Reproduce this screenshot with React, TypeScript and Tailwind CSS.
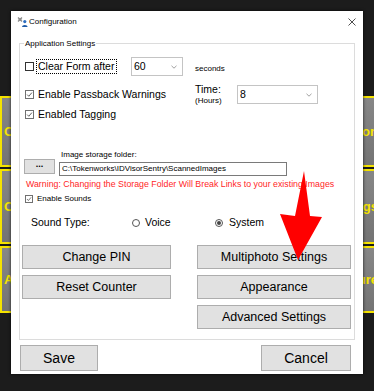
import React from 'react';

function Check({ checked, small }: { checked?: boolean; small?: boolean }) {
  return (
    <span
      className={`flex shrink-0 items-center justify-center border bg-white ${small ? 'h-[8px] w-[8px]' : 'h-[9px] w-[9px]'} ${checked ? 'border-[#707070]' : 'border-[#333333]'}`}
    >
      {checked && (
        <svg viewBox="0 0 8 8" className="h-full w-full">
          <path d="M1.3 4.1 L3.2 6 L6.8 1.8" fill="none" stroke="#333" strokeWidth="0.9" />
        </svg>
      )}
    </span>
  );
}

function Radio({ on }: { on?: boolean }) {
  return (
    <span className="flex h-[8px] w-[8px] shrink-0 items-center justify-center rounded-full border border-[#555] bg-white">
      {on && <span className="h-[4px] w-[4px] rounded-full bg-[#444]" />}
    </span>
  );
}

function Combo({ value, className }: { value: string; className: string }) {
  return (
    <div className={`flex items-center justify-between border border-[#c4c4c4] bg-white pl-[2px] pr-[5px] text-[10.5px] text-black ${className}`}>
      <span>{value}</span>
      <svg width="6" height="4" viewBox="0 0 6 4">
        <path d="M0.5 0.8 L3 3.2 L5.5 0.8" fill="none" stroke="#888" strokeWidth="0.8" />
      </svg>
    </div>
  );
}

function Btn({ children, className }: { children: React.ReactNode; className: string }) {
  return (
    <div className={`flex items-center justify-center border border-[#adadad] bg-[#e1e1e1] text-black ${className}`}>
      {children}
    </div>
  );
}

function BgButton({ label, right, className }: { label: string; right?: boolean; className: string }) {
  return (
    <div
      className={`flex items-center border-2 border-[#f5e300] bg-gradient-to-b from-[#878787] to-[#747474] text-[13px] font-bold text-[#f5e300] ${right ? 'justify-end pr-[2px]' : 'pl-[2px]'} ${className}`}
    >
      {label}
    </div>
  );
}

export default function App() {
  return (
    <div className="relative h-[391px] w-[374px] overflow-hidden bg-[#1c1c1c] font-['Liberation_Sans',Arial,sans-serif]">
      {/* app behind the dialog */}
      <div className="flex w-[382px] justify-between pt-[96px]">
        <div className="flex w-[170px] flex-col gap-[2px]">
          <BgButton label="Clear" className="h-[71px]" />
          <BgButton label="Count" className="h-[75px]" />
          <BgButton label="About" className="h-[67px]" />
        </div>
        <div className="flex w-[170px] flex-col gap-[2px]">
          <BgButton right label="Configuration" className="h-[71px]" />
          <BgButton right label="Settings" className="h-[75px]" />
          <BgButton right label="Capture" className="h-[67px]" />
        </div>
      </div>

      {/* Configuration dialog */}
      <div className="absolute left-[11px] top-[11px] flex h-[363px] w-[352px] flex-col bg-white shadow-[0_0_3px_rgba(0,0,0,0.8)]">
        <div className="flex h-[21px] items-center pl-[6px] pr-[7px]">
          <svg width="11" height="11" viewBox="0 0 11 11">
            <path d="M1 1.5 L5 5.5 M5 1.5 L1 5.5" stroke="#8a8a8a" strokeWidth="1.2" />
            <circle cx="3" cy="3.5" r="1.2" fill="none" stroke="#8a8a8a" strokeWidth="0.8" />
            <circle cx="7.8" cy="5.6" r="1.6" fill="#2f6fc0" />
            <path d="M5 11 C5 8.2 10.6 8.2 10.6 11 Z" fill="#1f5aa6" />
          </svg>
          <span className="ml-px text-[8px] text-black">Configuration</span>
          <svg className="ml-auto" width="8" height="8" viewBox="0 0 8 8">
            <path d="M0.5 0.5 L7.5 7.5 M7.5 0.5 L0.5 7.5" stroke="#222" strokeWidth="0.8" />
          </svg>
        </div>

        {/* group box */}
        <div className="mx-[8px] mt-[11px]">
          <div className="relative h-[297px] border border-[#dcdcdc] text-black">
            <span className="absolute -top-[5px] left-[4px] bg-white px-px text-[8px] leading-[10px]">
              Application Settings
            </span>

            <div className="mt-[13px] flex h-[19px] items-center pl-[5px]">
              <Check />
              <div className="ml-[2px] flex h-[15px] w-[81px] items-center border border-dotted border-black pl-px text-[10.5px]">
                Clear Form after
              </div>
              <Combo value="60" className="ml-[14px] h-[19px] w-[52px]" />
              <span className="ml-[12px] mt-[5px] text-[8px]">seconds</span>
            </div>

            <div className="mt-[9px] flex h-[19px] items-start pl-[5px]">
              <div className="flex h-[19px] w-[170px] items-center">
                <Check checked />
                <span className="ml-[4px] text-[10.5px]">Enable Passback Warnings</span>
              </div>
              <div className="-mt-px flex w-[42px] flex-col">
                <span className="text-[10.5px] leading-[10px]">Time:</span>
                <span className="mt-[2px] text-[8px] leading-[10px]">(Hours)</span>
              </div>
              <Combo value="8" className="h-[19px] w-[81px]" />
            </div>

            <div className="mt-px flex h-[19px] items-center pl-[5px]">
              <Check checked />
              <span className="ml-[4px] text-[10.5px]">Enabled Tagging</span>
            </div>

            <div className="mt-[27px] h-[8px] pl-[41px] text-[8px] leading-[8px]">Image storage folder:</div>

            <div className="flex h-[17px] items-start pl-[4px]">
              <Btn className="h-[15px] w-[31px] pb-[3px] text-[9px] font-bold">...</Btn>
              <div className="ml-[4px] mt-[3px] flex h-[14px] w-[228px] items-center border border-[#7a7a7a] pl-[2px] text-[8px]">
                C:\Tokenworks\IDVisorSentry\ScannedImages
              </div>
            </div>

            <div className="mt-[3px] h-[11px] pl-[6px] text-[8.8px] leading-[11px] text-[#ff1f1f]">
              Warning: Changing the Storage Folder Will Break Links to your existing Images
            </div>

            <div className="mt-[4px] flex h-[10px] items-center pl-[5px]">
              <Check checked small />
              <span className="ml-[4px] text-[8px]">Enable Sounds</span>
            </div>

            <div className="mt-[11px] flex h-[15px] items-center pl-[11px] text-[10.5px]">
              <span className="w-[101px]">Sound Type:</span>
              <div className="flex w-[83px] items-center">
                <Radio />
                <span className="ml-[5px]">Voice</span>
              </div>
              <div className="flex items-center">
                <Radio on />
                <span className="ml-[6px]">System</span>
              </div>
            </div>

            <div className="mt-[15px] flex pl-[2px] text-[12.5px]">
              <div className="flex w-[149px] flex-col gap-[6px]">
                <Btn className="h-[24px]">Change PIN</Btn>
                <Btn className="h-[24px]">Reset Counter</Btn>
              </div>
              <div className="ml-[26px] flex w-[154px] flex-col gap-[6px]">
                <Btn className="h-[24px]">Multiphoto Settings</Btn>
                <Btn className="h-[24px]">Appearance</Btn>
                <Btn className="h-[24px]">Advanced Settings</Btn>
              </div>
            </div>
          </div>
        </div>

        <div className="mt-[5px] flex justify-between pl-[9px] pr-[12px] text-[14px]">
          <Btn className="h-[26px] w-[78px]">Save</Btn>
          <Btn className="h-[26px] w-[90px]">Cancel</Btn>
        </div>
      </div>

      {/* red annotation arrow */}
      <svg className="pointer-events-none absolute left-0 top-0" width="374" height="391" viewBox="0 0 374 391">
        <polygon points="304,171 310,216 322,217 298,260 280,214 295,216" fill="#ff0000" />
      </svg>
    </div>
  );
}
